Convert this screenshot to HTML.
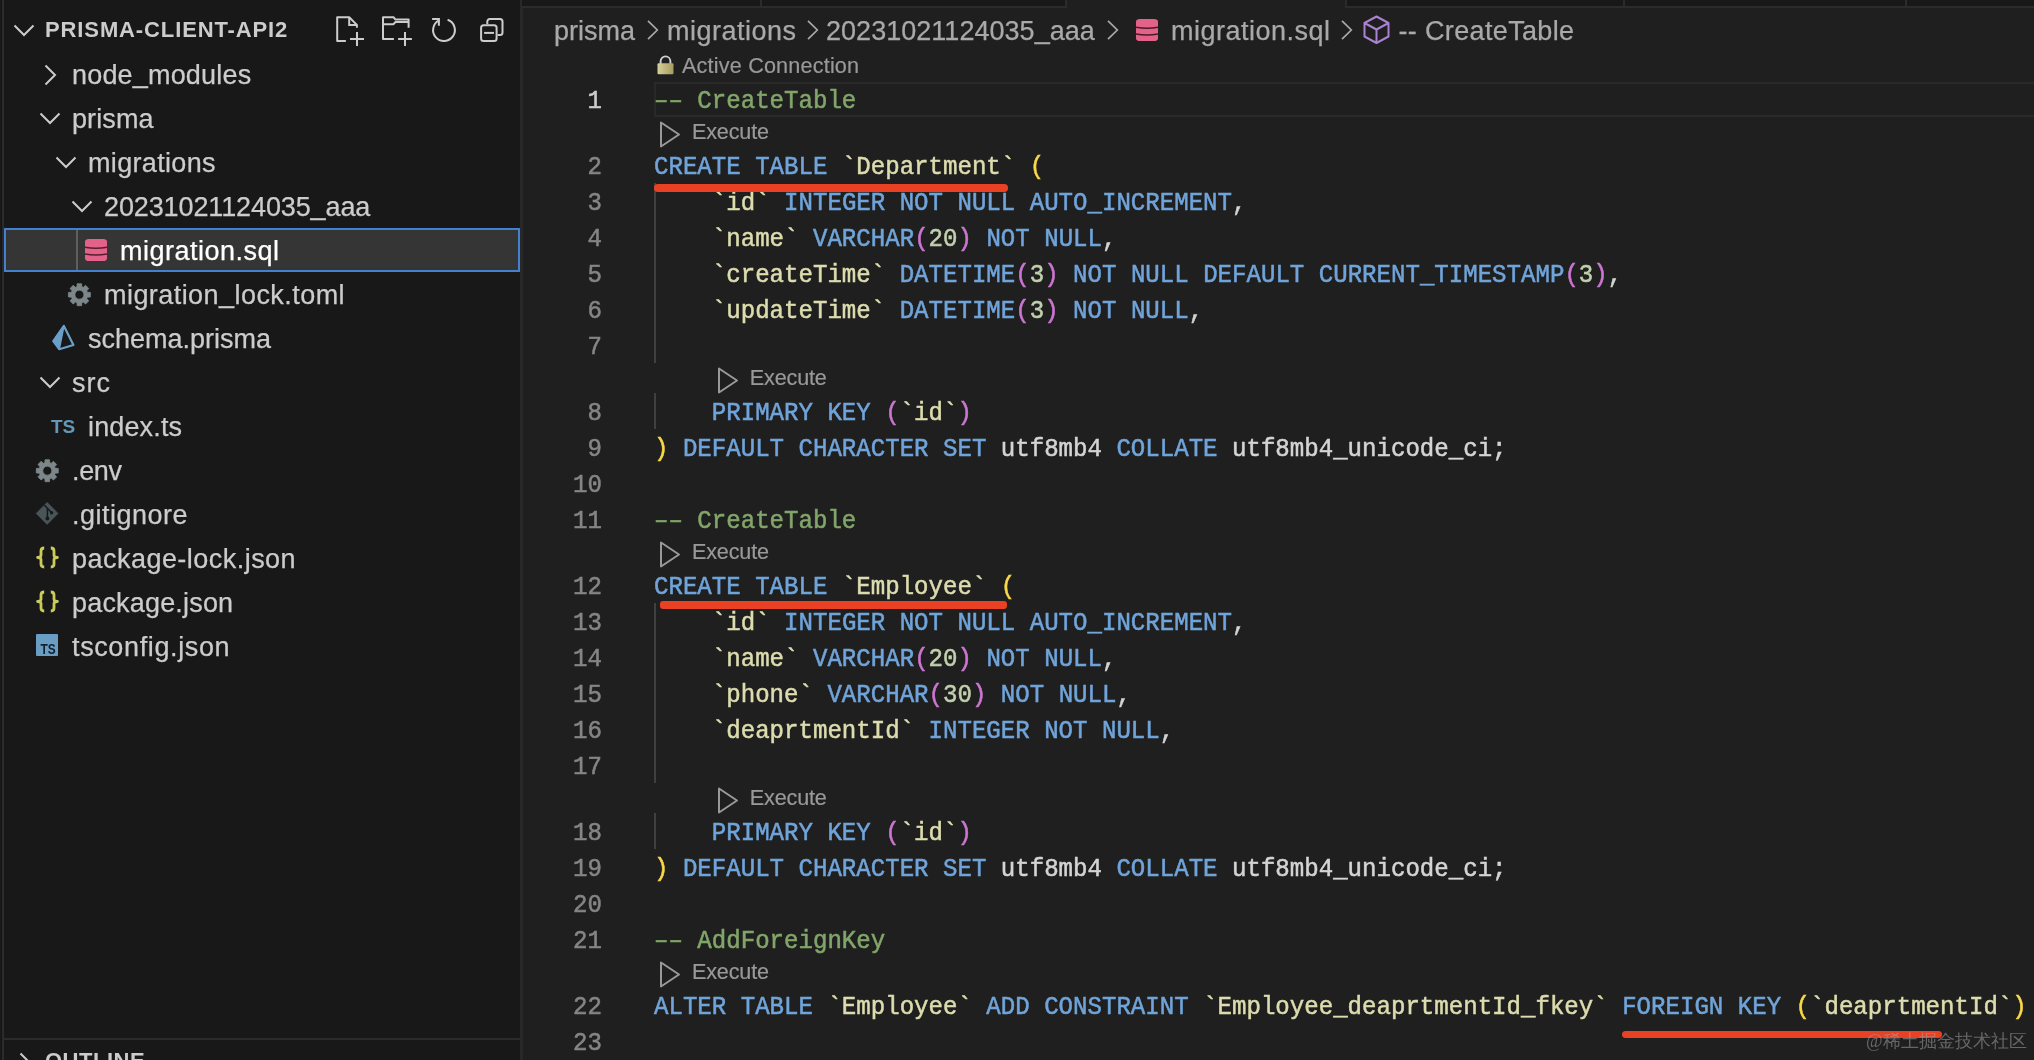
<!DOCTYPE html>
<html><head><meta charset="utf-8">
<style>
*{margin:0;padding:0;box-sizing:border-box}
html,body{width:2034px;height:1060px;overflow:hidden;background:#1f1f1f}
body{position:relative;font-family:"Liberation Sans",sans-serif}
.a{position:absolute}
.t{position:absolute;white-space:pre}
.side{color:#cccccc;font-size:27px;line-height:44px;-webkit-text-stroke-width:0.25px}
.code{position:absolute;white-space:pre;font-family:"Liberation Mono",monospace;font-size:24.08px;line-height:36px;height:36px;transform-origin:0 24px;transform:scaleY(1.1);-webkit-text-stroke-width:0.5px}
.ln{position:absolute;white-space:pre;font-family:"Liberation Mono",monospace;font-size:24.08px;line-height:36px;color:#858585;text-align:right;width:80px;left:522px;transform-origin:0 24px;transform:scaleY(1.1);-webkit-text-stroke-width:0.5px}
.lens{position:absolute;white-space:pre;font-size:21.6px;line-height:30px;color:#999999;-webkit-text-stroke-width:0.2px}
.bc{position:absolute;white-space:pre;font-size:27px;line-height:44px;color:#a9a9a9;top:8.5px;-webkit-text-stroke-width:0.25px}
svg{position:absolute;overflow:visible}
</style></head><body><div style="position:absolute;left:0;top:0;width:2034px;height:1060px;overflow:hidden;will-change:transform">

<div class="a" style="left:0;top:0;width:1px;height:1060px;background:#1a1a1a"></div>
<div class="a" style="left:1px;top:0;width:1px;height:1060px;background:#141414"></div>
<div class="a" style="left:2px;top:0;width:2px;height:1060px;background:#2b2b2b"></div>
<div class="a" style="left:4px;top:0;width:516px;height:1060px;background:#181818"></div>
<div class="a" style="left:520px;top:0;width:3px;height:1060px;background:#282828"></div>
<svg style="left:0;top:0" width="40" height="50"><path d="M14.5 25.5 L24 35 L33.5 25.5" fill="none" stroke="#cccccc" stroke-width="2"/></svg>
<div class="t" style="left:45px;top:8px;line-height:44px;font-size:22px;font-weight:bold;color:#cccccc;letter-spacing:0.882px">PRISMA-CLIENT-API2</div>
<svg style="left:330px;top:10px" width="40" height="40" viewBox="0 0 40 40"><path d="M15.9 30.9 H7.2 V7.2 H19.2 L26.9 14.9 V17.7" fill="none" stroke="#cccccc" stroke-width="2" stroke-linejoin="round"/><path d="M19.2 7.2 V14.9 H26.9" fill="none" stroke="#cccccc" stroke-width="2"/><path d="M20 29 H34 M27 22 V36" stroke="#cccccc" stroke-width="2"/></svg>
<svg style="left:376px;top:10px" width="40" height="40" viewBox="0 0 40 40"><path d="M17.9 29 H7 V7.2 H17.5 L19.5 9.6 H32.6 V17.7" fill="none" stroke="#cccccc" stroke-width="2" stroke-linejoin="round"/><path d="M7 14.2 H17.5 L19.5 12 H32.6" fill="none" stroke="#cccccc" stroke-width="2" stroke-linejoin="round"/><path d="M22.1 29 H35.9 M29 22 V36" stroke="#cccccc" stroke-width="2"/></svg>
<svg style="left:424px;top:10px" width="40" height="40" viewBox="0 0 40 40"><path d="M15 10.4 A10.9 10.9 0 1 0 23.6 9.8" fill="none" stroke="#cccccc" stroke-width="2"/><path d="M8.1 9.1 H14.9 V15.7" fill="none" stroke="#cccccc" stroke-width="2"/></svg>
<svg style="left:472px;top:10px" width="40" height="40" viewBox="0 0 40 40"><rect x="9.1" y="15.2" width="15.5" height="15.7" rx="2.5" fill="none" stroke="#cccccc" stroke-width="2"/><path d="M15.3 14.2 V11.5 A2.5 2.5 0 0 1 17.8 9 H28 A2.5 2.5 0 0 1 30.5 11.5 V22.4 A2.5 2.5 0 0 1 28 24.9 H25.6" fill="none" stroke="#cccccc" stroke-width="2"/><path d="M12.1 22.9 H22" stroke="#cccccc" stroke-width="2"/></svg>
<svg style="left:43px;top:63px" width="16" height="24"><path d="M2.5 2.5 L12 12 L2.5 21.5" fill="none" stroke="#cccccc" stroke-width="2"/></svg>
<div class="t side" style="left:72px;top:53px;color:#cccccc;letter-spacing:0.183px">node<span style="position:relative;top:-2px">_</span>modules</div>
<svg style="left:38px;top:111px" width="24" height="16"><path d="M2.5 2.5 L12 12 L21.5 2.5" fill="none" stroke="#cccccc" stroke-width="2"/></svg>
<div class="t side" style="left:72px;top:97px;color:#cccccc;letter-spacing:0.1px">prisma</div>
<svg style="left:54px;top:155px" width="24" height="16"><path d="M2.5 2.5 L12 12 L21.5 2.5" fill="none" stroke="#cccccc" stroke-width="2"/></svg>
<div class="t side" style="left:88px;top:141px;color:#cccccc;letter-spacing:0.332px">migrations</div>
<svg style="left:70px;top:199px" width="24" height="16"><path d="M2.5 2.5 L12 12 L21.5 2.5" fill="none" stroke="#cccccc" stroke-width="2"/></svg>
<div class="t side" style="left:104px;top:185px;color:#cccccc;letter-spacing:-0.118px">20231021124035<span style="position:relative;top:-2px">_</span>aaa</div>
<div class="a" style="left:4px;top:228px;width:516px;height:44px;background:#353535;border:2px solid #4280d0"></div>
<div class="a" style="left:76px;top:230px;width:2px;height:40px;background:#5f5f5f"></div>
<svg style="left:85px;top:238.5px" width="22" height="22" viewBox="0 0 22 22"><path d="M0 2.8 Q0 0 4 0 H18 Q22 0 22 2.8 V19.2 Q22 22 18 22 H4 Q0 22 0 19.2 Z" fill="#e3628a"/><path d="M0 8.2 Q11 10.4 22 8.2 M0 14.9 Q11 17.1 22 14.9" fill="none" stroke="#5a1d30" stroke-width="1.5"/></svg>
<div class="t side" style="left:120px;top:229px;color:#ffffff;letter-spacing:0.499px">migration.sql</div>
<svg style="left:0;top:0" width="1" height="1"><path d="M76.95 286.77 L77.17 283.72 L81.63 283.72 L81.85 286.77 L83.27 287.36 L85.59 285.36 L88.74 288.51 L86.74 290.83 L87.33 292.25 L90.38 292.47 L90.38 296.93 L87.33 297.15 L86.74 298.57 L88.74 300.89 L85.59 304.04 L83.27 302.04 L81.85 302.63 L81.63 305.68 L77.17 305.68 L76.95 302.63 L75.53 302.04 L73.21 304.04 L70.06 300.89 L72.06 298.57 L71.47 297.15 L68.42 296.93 L68.42 292.47 L71.47 292.25 L72.06 290.83 L70.06 288.51 L73.21 285.36 L75.53 287.36Z M83.90 294.70 A4.5 4.5 0 1 0 74.90 294.70 A4.5 4.5 0 1 0 83.90 294.70Z" fill="#7d878a" fill-rule="evenodd" stroke="#7d878a" stroke-width="0.8" stroke-linejoin="round"/></svg>
<div class="t side" style="left:104px;top:273px;color:#cccccc;letter-spacing:0.444px">migration<span style="position:relative;top:-2px">_</span>lock.toml</div>
<svg style="left:0;top:0" width="1" height="1"><path d="M63.9 326 L73.4 345 L59.3 349.2 L53.3 341.2 Z" fill="none" stroke="#6a9fc8" stroke-width="2.2" stroke-linejoin="round"/><path d="M63.9 326 L53.3 341.2 L59.3 349.2 Z" fill="#6a9fc8" stroke="#6a9fc8" stroke-width="1.5" stroke-linejoin="round"/></svg>
<div class="t side" style="left:88px;top:317px;color:#cccccc;letter-spacing:0.0px">schema.prisma</div>
<svg style="left:38px;top:375px" width="24" height="16"><path d="M2.5 2.5 L12 12 L21.5 2.5" fill="none" stroke="#cccccc" stroke-width="2"/></svg>
<div class="t side" style="left:72px;top:361px;color:#cccccc;letter-spacing:1.0px">src</div>
<div class="t" style="left:51px;top:405px;line-height:44px;font-size:19px;font-weight:bold;color:#6398b7">TS</div>
<div class="t side" style="left:88px;top:405px;color:#cccccc;letter-spacing:0.141px">index.ts</div>
<svg style="left:0;top:0" width="1" height="1"><path d="M44.85 462.77 L45.07 459.72 L49.53 459.72 L49.75 462.77 L51.17 463.36 L53.49 461.36 L56.64 464.51 L54.64 466.83 L55.23 468.25 L58.28 468.47 L58.28 472.93 L55.23 473.15 L54.64 474.57 L56.64 476.89 L53.49 480.04 L51.17 478.04 L49.75 478.63 L49.53 481.68 L45.07 481.68 L44.85 478.63 L43.43 478.04 L41.11 480.04 L37.96 476.89 L39.96 474.57 L39.37 473.15 L36.32 472.93 L36.32 468.47 L39.37 468.25 L39.96 466.83 L37.96 464.51 L41.11 461.36 L43.43 463.36Z M51.80 470.70 A4.5 4.5 0 1 0 42.80 470.70 A4.5 4.5 0 1 0 51.80 470.70Z" fill="#7d878a" fill-rule="evenodd" stroke="#7d878a" stroke-width="0.8" stroke-linejoin="round"/></svg>
<div class="t side" style="left:72px;top:449px;color:#cccccc;letter-spacing:-0.334px">.env</div>
<svg style="left:0;top:0" width="1" height="1"><path d="M47.1 502.5 L57.9 513.4 L47.1 524.3 L36.3 513.4 Z" fill="#4a5558" stroke="#4a5558" stroke-width="1" stroke-linejoin="round"/><path d="M44.2 505 L51.5 512.5 M47.4 508.3 V518" stroke="#161a1b" stroke-width="1.5" fill="none"/><circle cx="47.4" cy="518.5" r="1.9" fill="#161a1b"/><circle cx="51.6" cy="512.8" r="1.7" fill="#161a1b"/></svg>
<div class="t side" style="left:72px;top:493px;color:#cccccc;letter-spacing:0.501px">.gitignore</div>
<svg style="left:0;top:0" width="1" height="1"><g transform="translate(0,0)" fill="none" stroke="#cbcb5a" stroke-width="2.8" stroke-linejoin="round"><path d="M44.2 548 Q41 548 41 551 V555.3 Q41 557.5 37.6 557.5 Q41 557.5 41 559.7 V564 Q41 567 44.2 567"/><path d="M50.8 548 Q54 548 54 551 V555.3 Q54 557.5 57.4 557.5 Q54 557.5 54 559.7 V564 Q54 567 50.8 567"/></g></svg>
<div class="t side" style="left:72px;top:537px;color:#cccccc;letter-spacing:0.469px">package-lock.json</div>
<svg style="left:0;top:0" width="1" height="1"><g transform="translate(0,44)" fill="none" stroke="#cbcb5a" stroke-width="2.8" stroke-linejoin="round"><path d="M44.2 548 Q41 548 41 551 V555.3 Q41 557.5 37.6 557.5 Q41 557.5 41 559.7 V564 Q41 567 44.2 567"/><path d="M50.8 548 Q54 548 54 551 V555.3 Q54 557.5 57.4 557.5 Q54 557.5 54 559.7 V564 Q54 567 50.8 567"/></g></svg>
<div class="t side" style="left:72px;top:581px;color:#cccccc;letter-spacing:0.182px">package.json</div>
<svg style="left:36.4px;top:634.4px" width="22" height="22" viewBox="0 0 22 22"><rect x="0" y="0" width="22" height="22" rx="1" fill="#6a9dc4"/><text x="4.4" y="20.3" font-family="Liberation Sans" font-size="15.4" font-weight="bold" fill="#14202a" textLength="15.2" lengthAdjust="spacingAndGlyphs">TS</text></svg>
<div class="t side" style="left:72px;top:625px;color:#cccccc;letter-spacing:0.624px">tsconfig.json</div>
<div class="a" style="left:4px;top:1038px;width:516px;height:2px;background:#2b2b2b"></div>
<svg style="left:17.5px;top:1051px" width="16" height="24"><path d="M2.5 2.5 L12 12 L2.5 21.5" fill="none" stroke="#cccccc" stroke-width="2"/></svg>
<div class="t" style="left:45px;top:1038.5px;line-height:44px;font-size:22px;font-weight:bold;color:#cccccc;letter-spacing:0.5px">OUTLINE</div>
<div class="a" style="left:522px;top:0;width:545px;height:6px;background:#181818"></div>
<div class="a" style="left:522px;top:6px;width:545px;height:1.5px;background:#2b2b2b"></div>
<div class="a" style="left:760px;top:0;width:2px;height:7px;background:#2b2b2b"></div>
<div class="a" style="left:1065px;top:0;width:2px;height:7px;background:#2b2b2b"></div>
<div class="a" style="left:1345px;top:0;width:689px;height:6px;background:#181818"></div>
<div class="a" style="left:1345px;top:6px;width:689px;height:1.5px;background:#2b2b2b"></div>
<div class="a" style="left:1345px;top:0;width:2px;height:7px;background:#2b2b2b"></div>
<div class="a" style="left:1623px;top:0;width:2px;height:7px;background:#2b2b2b"></div>
<div class="a" style="left:1905px;top:0;width:2px;height:7px;background:#2b2b2b"></div>
<div class="bc" style="left:554px;letter-spacing:-0.0px">prisma</div>
<div class="bc" style="left:667px;letter-spacing:0.5px">migrations</div>
<div class="bc" style="left:826px;letter-spacing:0.03px">20231021124035<span style="position:relative;top:-2px">_</span>aaa</div>
<div class="bc" style="left:1171px;letter-spacing:0.501px">migration.sql</div>
<div class="bc" style="left:1398.5px;letter-spacing:0.345px">-- CreateTable</div>
<svg style="left:646.5px;top:20px" width="12" height="22"><path d="M1 0.8 L10.3 10 L1 19.2" fill="none" stroke="#a9a9a9" stroke-width="1.7"/></svg>
<svg style="left:806.5px;top:20px" width="12" height="22"><path d="M1 0.8 L10.3 10 L1 19.2" fill="none" stroke="#a9a9a9" stroke-width="1.7"/></svg>
<svg style="left:1106.5px;top:20px" width="12" height="22"><path d="M1 0.8 L10.3 10 L1 19.2" fill="none" stroke="#a9a9a9" stroke-width="1.7"/></svg>
<svg style="left:1340.5px;top:20px" width="12" height="22"><path d="M1 0.8 L10.3 10 L1 19.2" fill="none" stroke="#a9a9a9" stroke-width="1.7"/></svg>
<svg style="left:1135.5px;top:18.5px" width="22" height="22" viewBox="0 0 22 22"><path d="M0 2.8 Q0 0 4 0 H18 Q22 0 22 2.8 V19.2 Q22 22 18 22 H4 Q0 22 0 19.2 Z" fill="#e3628a"/><path d="M0 8.2 Q11 10.4 22 8.2 M0 14.9 Q11 17.1 22 14.9" fill="none" stroke="#4a1a28" stroke-width="1.5"/></svg>
<svg style="left:1363px;top:15px" width="28" height="30" viewBox="0 0 28 30"><path d="M13.5 1.5 L25.5 8 V21.5 L13.5 28 L1.5 21.5 V8 Z M1.5 8 L13.5 14.5 L25.5 8 M13.5 14.5 V28" fill="none" stroke="#aa82d2" stroke-width="2" stroke-linejoin="round"/></svg>
<div class="a" style="left:654px;top:82px;width:1380px;height:35px;border:2px solid #292929;border-right:0"></div>
<div class="a" style="left:654px;top:183px;width:2px;height:180px;background:#404040"></div>
<div class="a" style="left:654px;top:393px;width:2px;height:36px;background:#404040"></div>
<div class="a" style="left:654px;top:603px;width:2px;height:180px;background:#404040"></div>
<div class="a" style="left:654px;top:813px;width:2px;height:36px;background:#404040"></div>
<svg style="left:657px;top:55px" width="17" height="20" viewBox="0 0 17 20"><defs><linearGradient id="lg" x1="0" x2="1"><stop offset="0" stop-color="#d6d09a"/><stop offset="0.5" stop-color="#bdb57a"/><stop offset="1" stop-color="#a49c62"/></linearGradient></defs><path d="M3.6 9 V6.3 A4.9 4.9 0 0 1 13.4 6.3 V9" fill="none" stroke="#d0d0d0" stroke-width="1.9"/><rect x="0.5" y="8.2" width="16" height="11" rx="1" fill="url(#lg)"/></svg>
<div class="lens" style="left:682px;top:51px;letter-spacing:0.189px">Active Connection</div>
<svg style="left:659.0px;top:121px" width="24" height="28" viewBox="0 0 24 28"><path d="M2 1.5 L20 13.5 L2 25.5 Z" fill="none" stroke="#999999" stroke-width="2" stroke-linejoin="round"/></svg>
<div class="lens" style="left:692.0px;top:117px;letter-spacing:-0.166px">Execute</div>
<svg style="left:716.8px;top:367px" width="24" height="28" viewBox="0 0 24 28"><path d="M2 1.5 L20 13.5 L2 25.5 Z" fill="none" stroke="#999999" stroke-width="2" stroke-linejoin="round"/></svg>
<div class="lens" style="left:749.8px;top:363px;letter-spacing:-0.166px">Execute</div>
<svg style="left:659.0px;top:541px" width="24" height="28" viewBox="0 0 24 28"><path d="M2 1.5 L20 13.5 L2 25.5 Z" fill="none" stroke="#999999" stroke-width="2" stroke-linejoin="round"/></svg>
<div class="lens" style="left:692.0px;top:537px;letter-spacing:-0.166px">Execute</div>
<svg style="left:716.8px;top:787px" width="24" height="28" viewBox="0 0 24 28"><path d="M2 1.5 L20 13.5 L2 25.5 Z" fill="none" stroke="#999999" stroke-width="2" stroke-linejoin="round"/></svg>
<div class="lens" style="left:749.8px;top:783px;letter-spacing:-0.166px">Execute</div>
<svg style="left:659.0px;top:961px" width="24" height="28" viewBox="0 0 24 28"><path d="M2 1.5 L20 13.5 L2 25.5 Z" fill="none" stroke="#999999" stroke-width="2" stroke-linejoin="round"/></svg>
<div class="lens" style="left:692.0px;top:957px;letter-spacing:-0.166px">Execute</div>
<div class="ln" style="top:84px;color:#cccccc">1</div>
<div class="code" style="left:654px;top:84px"><span style="color:#82a66a">–– CreateTable</span></div>
<div class="ln" style="top:150px;color:#858585">2</div>
<div class="code" style="left:654px;top:150px"><span style="color:#70a4da">CREATE TABLE</span><span style="color:#d4d4d4"> </span><span style="color:#dcdcae">`Department`</span><span style="color:#d4d4d4"> </span><span style="color:#f9d849">(</span></div>
<div class="ln" style="top:186px;color:#858585">3</div>
<div class="code" style="left:654px;top:186px"><span style="color:#d4d4d4">    </span><span style="color:#dcdcae">`id`</span><span style="color:#d4d4d4"> </span><span style="color:#70a4da">INTEGER NOT NULL AUTO_INCREMENT</span><span style="color:#d4d4d4">,</span></div>
<div class="ln" style="top:222px;color:#858585">4</div>
<div class="code" style="left:654px;top:222px"><span style="color:#d4d4d4">    </span><span style="color:#dcdcae">`name`</span><span style="color:#d4d4d4"> </span><span style="color:#70a4da">VARCHAR</span><span style="color:#cc76d1">(</span><span style="color:#c2d1ad">20</span><span style="color:#cc76d1">)</span><span style="color:#d4d4d4"> </span><span style="color:#70a4da">NOT NULL</span><span style="color:#d4d4d4">,</span></div>
<div class="ln" style="top:258px;color:#858585">5</div>
<div class="code" style="left:654px;top:258px"><span style="color:#d4d4d4">    </span><span style="color:#dcdcae">`createTime`</span><span style="color:#d4d4d4"> </span><span style="color:#70a4da">DATETIME</span><span style="color:#cc76d1">(</span><span style="color:#c2d1ad">3</span><span style="color:#cc76d1">)</span><span style="color:#d4d4d4"> </span><span style="color:#70a4da">NOT NULL DEFAULT CURRENT_TIMESTAMP</span><span style="color:#cc76d1">(</span><span style="color:#c2d1ad">3</span><span style="color:#cc76d1">)</span><span style="color:#d4d4d4">,</span></div>
<div class="ln" style="top:294px;color:#858585">6</div>
<div class="code" style="left:654px;top:294px"><span style="color:#d4d4d4">    </span><span style="color:#dcdcae">`updateTime`</span><span style="color:#d4d4d4"> </span><span style="color:#70a4da">DATETIME</span><span style="color:#cc76d1">(</span><span style="color:#c2d1ad">3</span><span style="color:#cc76d1">)</span><span style="color:#d4d4d4"> </span><span style="color:#70a4da">NOT NULL</span><span style="color:#d4d4d4">,</span></div>
<div class="ln" style="top:330px;color:#858585">7</div>
<div class="ln" style="top:396px;color:#858585">8</div>
<div class="code" style="left:654px;top:396px"><span style="color:#d4d4d4">    </span><span style="color:#70a4da">PRIMARY KEY</span><span style="color:#d4d4d4"> </span><span style="color:#cc76d1">(</span><span style="color:#dcdcae">`id`</span><span style="color:#cc76d1">)</span></div>
<div class="ln" style="top:432px;color:#858585">9</div>
<div class="code" style="left:654px;top:432px"><span style="color:#f9d849">)</span><span style="color:#d4d4d4"> </span><span style="color:#70a4da">DEFAULT CHARACTER SET</span><span style="color:#d4d4d4"> utf8mb4 </span><span style="color:#70a4da">COLLATE</span><span style="color:#d4d4d4"> utf8mb4_unicode_ci;</span></div>
<div class="ln" style="top:468px;color:#858585">10</div>
<div class="ln" style="top:504px;color:#858585">11</div>
<div class="code" style="left:654px;top:504px"><span style="color:#82a66a">–– CreateTable</span></div>
<div class="ln" style="top:570px;color:#858585">12</div>
<div class="code" style="left:654px;top:570px"><span style="color:#70a4da">CREATE TABLE</span><span style="color:#d4d4d4"> </span><span style="color:#dcdcae">`Employee`</span><span style="color:#d4d4d4"> </span><span style="color:#f9d849">(</span></div>
<div class="ln" style="top:606px;color:#858585">13</div>
<div class="code" style="left:654px;top:606px"><span style="color:#d4d4d4">    </span><span style="color:#dcdcae">`id`</span><span style="color:#d4d4d4"> </span><span style="color:#70a4da">INTEGER NOT NULL AUTO_INCREMENT</span><span style="color:#d4d4d4">,</span></div>
<div class="ln" style="top:642px;color:#858585">14</div>
<div class="code" style="left:654px;top:642px"><span style="color:#d4d4d4">    </span><span style="color:#dcdcae">`name`</span><span style="color:#d4d4d4"> </span><span style="color:#70a4da">VARCHAR</span><span style="color:#cc76d1">(</span><span style="color:#c2d1ad">20</span><span style="color:#cc76d1">)</span><span style="color:#d4d4d4"> </span><span style="color:#70a4da">NOT NULL</span><span style="color:#d4d4d4">,</span></div>
<div class="ln" style="top:678px;color:#858585">15</div>
<div class="code" style="left:654px;top:678px"><span style="color:#d4d4d4">    </span><span style="color:#dcdcae">`phone`</span><span style="color:#d4d4d4"> </span><span style="color:#70a4da">VARCHAR</span><span style="color:#cc76d1">(</span><span style="color:#c2d1ad">30</span><span style="color:#cc76d1">)</span><span style="color:#d4d4d4"> </span><span style="color:#70a4da">NOT NULL</span><span style="color:#d4d4d4">,</span></div>
<div class="ln" style="top:714px;color:#858585">16</div>
<div class="code" style="left:654px;top:714px"><span style="color:#d4d4d4">    </span><span style="color:#dcdcae">`deaprtmentId`</span><span style="color:#d4d4d4"> </span><span style="color:#70a4da">INTEGER NOT NULL</span><span style="color:#d4d4d4">,</span></div>
<div class="ln" style="top:750px;color:#858585">17</div>
<div class="ln" style="top:816px;color:#858585">18</div>
<div class="code" style="left:654px;top:816px"><span style="color:#d4d4d4">    </span><span style="color:#70a4da">PRIMARY KEY</span><span style="color:#d4d4d4"> </span><span style="color:#cc76d1">(</span><span style="color:#dcdcae">`id`</span><span style="color:#cc76d1">)</span></div>
<div class="ln" style="top:852px;color:#858585">19</div>
<div class="code" style="left:654px;top:852px"><span style="color:#f9d849">)</span><span style="color:#d4d4d4"> </span><span style="color:#70a4da">DEFAULT CHARACTER SET</span><span style="color:#d4d4d4"> utf8mb4 </span><span style="color:#70a4da">COLLATE</span><span style="color:#d4d4d4"> utf8mb4_unicode_ci;</span></div>
<div class="ln" style="top:888px;color:#858585">20</div>
<div class="ln" style="top:924px;color:#858585">21</div>
<div class="code" style="left:654px;top:924px"><span style="color:#82a66a">–– AddForeignKey</span></div>
<div class="ln" style="top:990px;color:#858585">22</div>
<div class="code" style="left:654px;top:990px"><span style="color:#70a4da">ALTER TABLE</span><span style="color:#d4d4d4"> </span><span style="color:#dcdcae">`Employee`</span><span style="color:#d4d4d4"> </span><span style="color:#70a4da">ADD CONSTRAINT</span><span style="color:#d4d4d4"> </span><span style="color:#dcdcae">`Employee_deaprtmentId_fkey`</span><span style="color:#d4d4d4"> </span><span style="color:#70a4da">FOREIGN KEY</span><span style="color:#d4d4d4"> </span><span style="color:#f9d849">(</span><span style="color:#dcdcae">`deaprtmentId`</span><span style="color:#f9d849">)</span></div>
<div class="ln" style="top:1026px;color:#858585">23</div>
<div class="a" style="left:654px;top:183.7px;width:353.5px;height:8.7px;border-radius:3.8px;background:#ea4125"></div>
<div class="a" style="left:659.9px;top:600.6px;width:347.3px;height:8.7px;border-radius:3.2px;background:#ea4125"></div>
<div class="a" style="left:1621.5px;top:1031.3px;width:320px;height:7.1px;border-radius:3.5px;background:#ea4125"></div>
<div class="t" style="left:1866px;top:1030px;font-family:'Liberation Serif',serif;font-size:18px;line-height:22px;color:rgba(160,160,160,0.55)">@稀土掘金技术社区</div>
</div></body></html>
